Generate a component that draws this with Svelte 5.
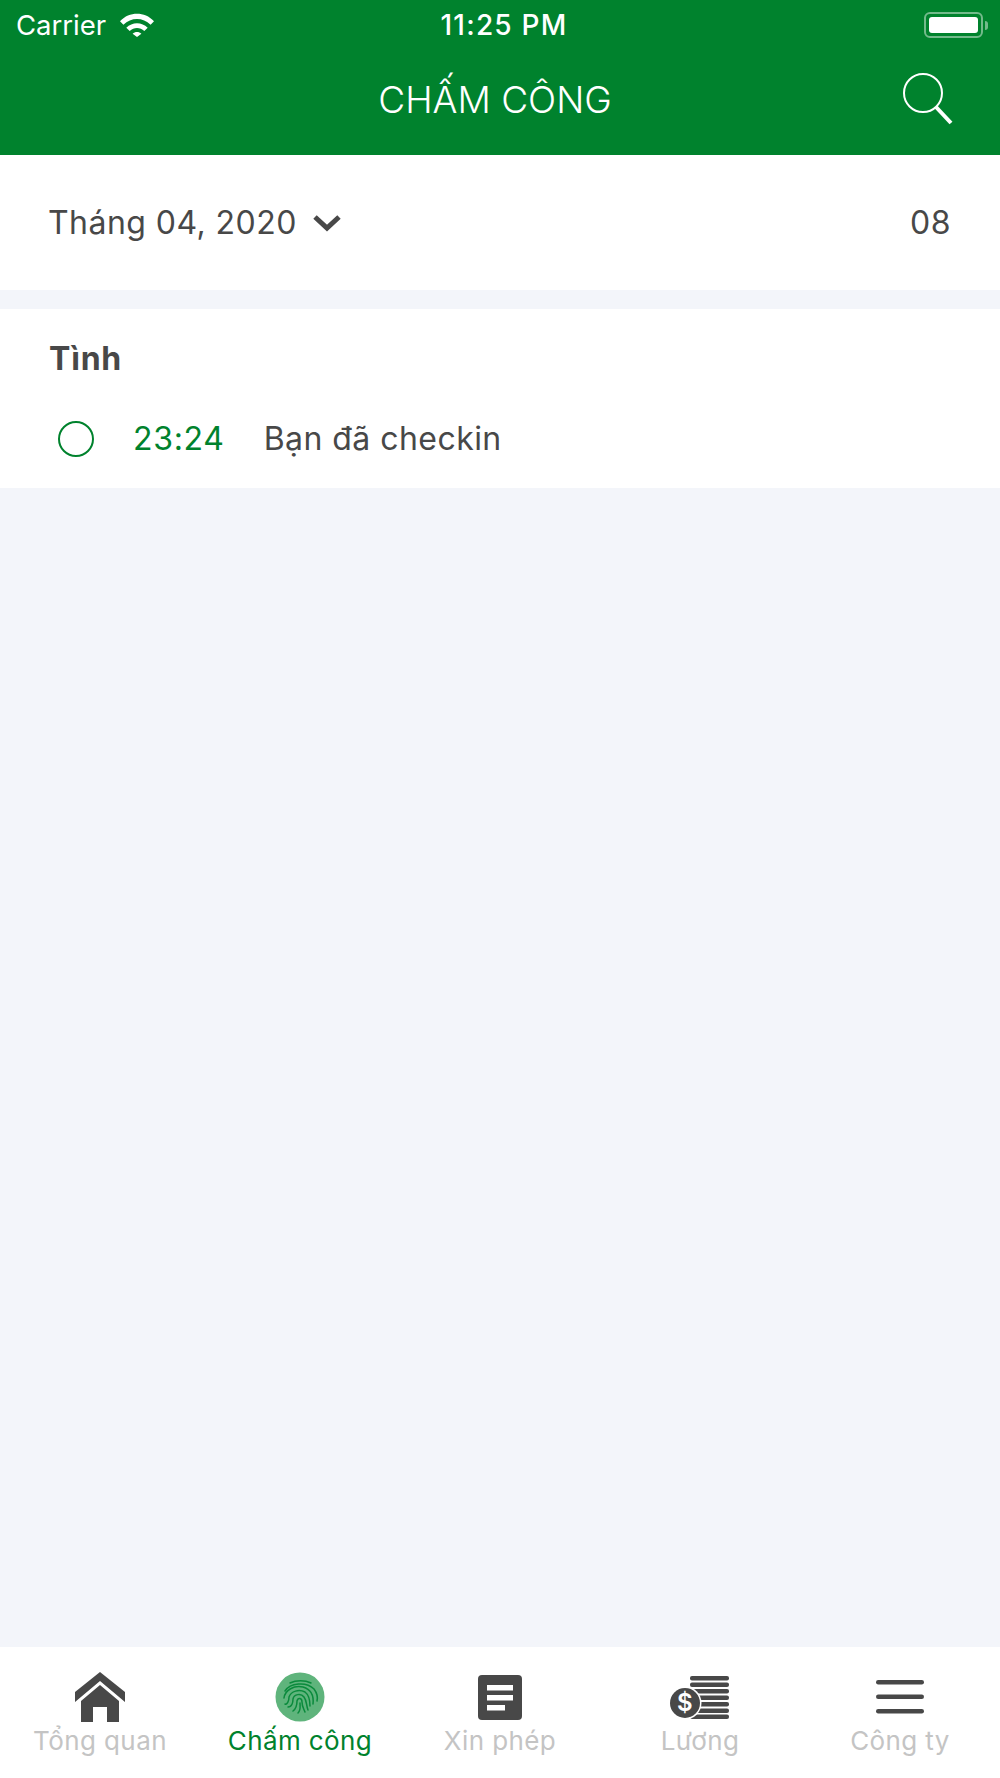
<script lang="ts">
	const tabs = [
		{ id: 'home', label: 'Tổng quan' },
		{ id: 'finger', label: 'Chấm công', active: true },
		{ id: 'doc', label: 'Xin phép' },
		{ id: 'coins', label: 'Lương' },
		{ id: 'menu', label: 'Công ty' }
	]
	const coinBars = [1, 7.5, 14, 20.5, 27, 33.5, 39.5]
</script>

<div class="screen">
	<header class="header">
		<div class="status">
			<div class="status-left">
				<span>Carrier</span>
				<svg class="wifi" viewBox="0 0 34 24" width="34" height="24">
					<path d="M0 8.2C9.5-1.6 24.500-1.600 34 8.200L30.600 11.700C22.900 4 11.100 4 3.400 11.700Z" fill="#fff" />
					<path d="M6.300 14.700C12.200 8.700 21.800 8.700 27.700 14.700L24.300 18.100C20.200 14 13.800 14 9.700 18.100Z" fill="#fff" />
					<path d="M12.600 20.800C15 18.500 19 18.500 21.400 20.800L17 24Z" fill="#fff" />
				</svg>
			</div>
			<div class="time">11:25 PM</div>
			<div class="status-right">
				<div class="battery"><div class="battery-fill"></div></div>
				<div class="nub"></div>
			</div>
		</div>
		<div class="title-row">
			<div></div>
			<h1>CHẤM CÔNG</h1>
			<svg class="search" viewBox="0 0 50 52" width="50" height="52" fill="none" stroke="#fff">
				<circle cx="20" cy="20" r="19" stroke-width="2" />
				<path d="M33 34L48 50" stroke-width="4" />
			</svg>
		</div>
	</header>

	<section class="month">
		<div class="month-picker">
			<span>Tháng 04, 2020</span>
			<svg viewBox="0 0 28 18" width="28" height="18" fill="none" stroke="#484848" stroke-width="5">
				<path d="M2 3L14 14L26 3" />
			</svg>
		</div>
		<span>08</span>
	</section>

	<section class="day">
		<h2>Tình</h2>
		<div class="entry">
			<span class="dot"></span>
			<span class="clock">23:24</span>
			<span>Bạn đã checkin</span>
		</div>
	</section>

	<main class="empty"></main>

	<nav class="tabs">
		{#each tabs as tab}
			<div class="tab" class:active={tab.active}>
				<div class="tab-icon">
					{#if tab.id === 'home'}
						<svg viewBox="0 0 50 50" width="50" height="50" fill="#484848">
							<path d="M25 0L50 20V30L25 9L0 30V20Z" />
							<path d="M25 13L44 29V50H32V35H18V50H6V29Z" />
						</svg>
					{:else if tab.id === 'finger'}
						<svg viewBox="0 0 50 50" width="50" height="50" fill="none">
							<circle cx="25" cy="25" r="24.500" fill="#5fb47c" />
							<g stroke="#0a8a3c" stroke-width="1.500" stroke-linecap="round">
								<path d="M15 11C21 8 30 8 36 11" />
								<path d="M10 19C15 11 31 9 39 17C42 21 43 25 42 29" />
								<path d="M9 26C10 18 19 13 28 15C35 17 39 23 38 32" />
								<path d="M10 32C12 33 14 29 14 25C16 19 24 17 30 20C34 23 35 28 35 34" />
								<path d="M13 35C17 35 18 30 18 27C19 22 26 21 29 25C32 29 31 33 33 38" />
								<path d="M18 39C22 36 22 32 22 29C23 25 27 26 27 30C27 35 29 37 30 40" />
								<path d="M23 41C26 38 25 34 25 31" />
							</g>
						</svg>
					{:else if tab.id === 'doc'}
						<svg viewBox="0 0 44 45" width="44" height="45">
							<rect width="44" height="45" rx="4" fill="#484848" />
							<rect x="9" y="10" width="26" height="5.500" fill="#fff" />
							<rect x="9" y="20" width="26" height="5.500" fill="#fff" />
							<rect x="9" y="30" width="18" height="5.500" fill="#fff" />
						</svg>
					{:else if tab.id === 'coins'}
						<svg viewBox="0 0 60 44" width="60" height="44">
							{#each coinBars as y}
								<rect x="20" {y} width="39" height="4.500" rx="2" fill="#484848" />
							{/each}
							<circle cx="15" cy="28" r="16.500" fill="#fff" />
							<circle cx="15" cy="28" r="15" fill="#484848" />
							<text x="15" y="36" class="dollar">$</text>
						</svg>
					{:else}
						<svg viewBox="0 0 48 34" width="48" height="34" fill="#484848">
							<rect y="0" width="48" height="4.500" rx="2.200" />
							<rect y="14.500" width="48" height="4.500" rx="2.200" />
							<rect y="29" width="48" height="4.500" rx="2.200" />
						</svg>
					{/if}
				</div>
				<span class="tab-label">{tab.label}</span>
			</div>
		{/each}
	</nav>
</div>

<style>
	:global(body) {
		margin: 0;
	}

	.screen {
		width: 1000px;
		height: 1778px;
		display: flex;
		flex-direction: column;
		background: #f3f5fa;
		font-family: Inter, "Liberation Sans", sans-serif;
		color: #484848;
		font-size: 32px;
		letter-spacing: 0.45px;
	}

	.header {
		height: 155px;
		background: #00822d;
		color: #fff;
		letter-spacing: 0;
	}

	.status {
		height: 50px;
		display: grid;
		grid-template-columns: 1fr auto 1fr;
		align-items: center;
		padding: 0 12px 0 16px;
		font-size: 27.5px;
	}

	.status-left {
		display: flex;
		align-items: center;
		gap: 14px;
	}

	.time {
		padding-left: 4px;
		font-size: 28px;
		font-weight: 500;
		letter-spacing: 1.2px;
	}

	.status-right {
		display: flex;
		align-items: center;
		justify-content: flex-end;
		gap: 2px;
	}

	.battery {
		width: 59px;
		height: 26px;
		box-sizing: border-box;
		padding: 3px;
		border: 2px solid rgba(255, 255, 255, 0.45);
		border-radius: 6px;
	}

	.battery-fill {
		height: 100%;
		background: #fff;
		border-radius: 3px;
	}

	.nub {
		width: 3px;
		height: 9px;
		background: rgba(255, 255, 255, 0.45);
		border-radius: 0 3px 3px 0;
	}

	.title-row {
		display: grid;
		grid-template-columns: 1fr auto 1fr;
		align-items: center;
		padding-right: 10px;
		height: 98px;
	}

	h1 {
		margin: 0;
		font-size: 37px;
		font-weight: 300;
	}

	.search {
		justify-self: end;
		margin-right: 37px;
	}

	.month {
		height: 135px;
		display: flex;
		align-items: center;
		justify-content: space-between;
		padding: 0 49px 0 48px;
		background: #fff;
		margin-bottom: 19px;
	}

	.month-picker {
		display: flex;
		align-items: center;
		gap: 16px;
	}

	.day {
		height: 179px;
		box-sizing: border-box;
		padding: 30px 49px 0;
		background: #fff;
	}

	h2 {
		margin: 0 0 41px;
		font-size: 32px;
		font-weight: 700;
		line-height: 39px;
		letter-spacing: 0.8px;
	}

	.entry {
		display: flex;
		align-items: center;
		padding-left: 9px;
		line-height: 39px;
	}

	.dot {
		width: 36px;
		height: 36px;
		box-sizing: border-box;
		border: 2px solid #00822d;
		border-radius: 50%;
		margin-right: 39px;
	}

	.clock {
		color: #00822d;
		margin-right: 39px;
		letter-spacing: 0.7px;
	}

	.empty {
		flex: 1;
	}

	.tabs {
		height: 131px;
		display: grid;
		grid-template-columns: repeat(5, 1fr);
		background: #fff;
	}

	.tab {
		display: flex;
		flex-direction: column;
		align-items: center;
		padding-top: 25px;
		font-size: 26px;
		line-height: 32px;
		letter-spacing: 0.4px;
		color: #c4c4c4;
	}

	.tab-icon {
		height: 50px;
		display: flex;
		align-items: center;
		justify-content: center;
	}

	.tab-label {
		margin-top: 3px;
	}

	.tab.active {
		color: #00822d;
	}

	.dollar {
		font-size: 24px;
		font-weight: 600;
		fill: #fff;
		text-anchor: middle;
	}
</style>
